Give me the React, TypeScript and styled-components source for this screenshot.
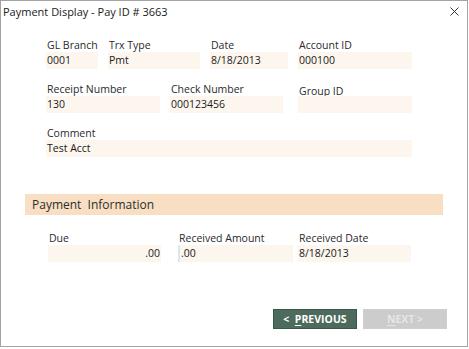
import styled, { createGlobalStyle } from "styled-components";

const GlobalStyle = createGlobalStyle`
  html, body {
    margin: 0;
    padding: 0;
    background: #ffffff;
  }
  body {
    font-family: "Open Sans", "Noto Sans", sans-serif;
    color: #222;
  }
`;

const Window = styled.div`
  width: 466px;
  height: 345px;
  border: 1px solid #a3a3a3;
  background: #ffffff;
  display: flex;
  flex-direction: column;
`;

const TitleBar = styled.div`
  height: 20px;
  display: flex;
  align-items: center;
  justify-content: space-between;
  padding: 0 8px 0 2px;
`;

const Title = styled.span`
  font-size: 11px;
  color: #1a1a1a;
`;

const Close = styled.svg`
  width: 9px;
  height: 9px;
`;

const Body = styled.div`
  flex: 1;
  display: flex;
  flex-direction: column;
  padding: 17px 0 0 0;
`;

const Section = styled.div`
  display: flex;
  flex-direction: column;
  gap: 13px;
  padding-left: 45px;
`;

const Row = styled.div`
  display: flex;
  gap: 10px;
`;

const Field = styled.div<{ $w: number; $offset?: number; $drop?: number }>`
  width: ${(p) => p.$w}px;
  margin-left: ${(p) => p.$offset ?? 0}px;
  display: flex;
  flex-direction: column;
`;

const Label = styled.div<{ $drop?: number }>`
  font-size: 10.5px;
  color: #2a2a2a;
  height: 14px;
  line-height: 14px;
  padding-left: 1px;
  margin-top: ${(p) => p.$drop ?? 0}px;
  margin-bottom: ${(p) => 0 - (p.$drop ?? 0)}px;
`;

const Value = styled.div<{ $right?: boolean; $focus?: boolean }>`
  height: 17px;
  line-height: 17px;
  background: #fdf6ef;
  font-size: 10.5px;
  color: #1a1a1a;
  padding: 0 ${(p) => (p.$right ? "1px" : "1px")};
  text-align: ${(p) => (p.$right ? "right" : "left")};
  border-left: ${(p) => (p.$focus ? "2px solid #dbe6ee" : "none")};
  white-space: nowrap;
`;

const Band = styled.div`
  margin: 37px 24px 0 24px;
  height: 21px;
  background: #f8dfc3;
  display: flex;
  align-items: center;
  padding-left: 7px;
  font-size: 12px;
  color: #2e2e2e;
  white-space: pre;
`;

const PayRow = styled.div`
  display: flex;
  padding: 16px 0 0 47px;
`;

const Footer = styled.div`
  display: flex;
  justify-content: flex-end;
  gap: 6px;
  padding: 47px 20px 0 0;
`;

const NavButton = styled.button<{ $disabled?: boolean }>`
  width: 84px;
  height: 20px;
  border: 1px solid ${(p) => (p.$disabled ? "#cfcfcf" : "#3a5648")};
  background: ${(p) => (p.$disabled ? "#cccccc" : "#4c6b5c")};
  color: ${(p) => (p.$disabled ? "#e6e6e6" : "#ffffff")};
  font-family: "Open Sans", "Noto Sans", sans-serif;
  font-weight: 700;
  font-size: 10.5px;
  padding: 0;
  white-space: pre;
  display: flex;
  align-items: center;
  justify-content: center;

  u {
    text-underline-offset: 2px;
  }
`;

export default function App() {
  return (
    <>
      <GlobalStyle />
      <Window>
        <TitleBar>
          <Title>Payment Display - Pay ID # 3663</Title>
          <Close viewBox="0 0 9 9">
            <path d="M0.5 0.5 L8.5 8.5 M8.5 0.5 L0.5 8.5" stroke="#333" strokeWidth="1" />
          </Close>
        </TitleBar>
        <Body>
          <Section>
            <Row>
              <Field $w={52}>
                <Label>GL Branch</Label>
                <Value>0001</Value>
              </Field>
              <Field $w={92}>
                <Label>Trx Type</Label>
                <Value>Pmt</Value>
              </Field>
              <Field $w={78}>
                <Label>Date</Label>
                <Value>8/18/2013</Value>
              </Field>
              <Field $w={114}>
                <Label>Account ID</Label>
                <Value>000100</Value>
              </Field>
            </Row>
            <Row>
              <Field $w={114}>
                <Label>Receipt Number</Label>
                <Value>130</Value>
              </Field>
              <Field $w={113}>
                <Label>Check Number</Label>
                <Value>000123456</Value>
              </Field>
              <Field $w={114} $offset={5}>
                <Label $drop={2}>Group ID</Label>
                <Value></Value>
              </Field>
            </Row>
            <Row>
              <Field $w={366}>
                <Label>Comment</Label>
                <Value>Test Acct</Value>
              </Field>
            </Row>
          </Section>
          <Band>Payment  Information</Band>
          <PayRow>
            <Field $w={113}>
              <Label>Due</Label>
              <Value $right>.00</Value>
            </Field>
            <Field $w={115} $offset={17}>
              <Label>Received Amount</Label>
              <Value $focus>.00</Value>
            </Field>
            <Field $w={113} $offset={5}>
              <Label>Received Date</Label>
              <Value>8/18/2013</Value>
            </Field>
          </PayRow>
          <Footer>
            <NavButton>
              {"<  "}
              <u>P</u>REVIOUS
            </NavButton>
            <NavButton $disabled>
              <u>N</u>
              {"EXT >"}
            </NavButton>
          </Footer>
        </Body>
      </Window>
    </>
  );
}
